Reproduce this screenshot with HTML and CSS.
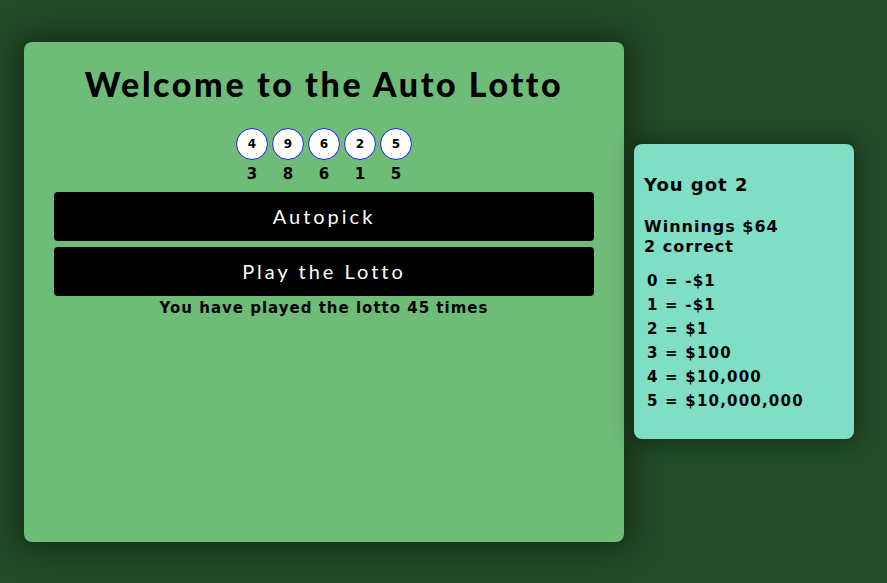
FILE: index.html
```html
<!DOCTYPE html>
<html>
<head>
<meta charset="utf-8">
<link rel="stylesheet" href="styles.css">
</head>
<body>
<div class="page">
  <main class="card">
    <h1 class="title">Welcome to the Auto Lotto</h1>
    <div class="balls">
      <div class="col"><div class="ball">4</div><div class="pick">3</div></div>
      <div class="col"><div class="ball">9</div><div class="pick">8</div></div>
      <div class="col"><div class="ball">6</div><div class="pick">6</div></div>
      <div class="col"><div class="ball">2</div><div class="pick">1</div></div>
      <div class="col"><div class="ball">5</div><div class="pick">5</div></div>
    </div>
    <button class="btn">Autopick</button>
    <button class="btn">Play the Lotto</button>
    <p class="played">You have played the lotto 45 times</p>
  </main>
  <aside class="side">
    <h2 class="got">You got 2</h2>
    <p class="win">Winnings $64<br>2 correct</p>
    <ul class="prizes">
      <li>0 = -$1</li>
      <li>1 = -$1</li>
      <li>2 = $1</li>
      <li>3 = $100</li>
      <li>4 = $10,000</li>
      <li>5 = $10,000,000</li>
    </ul>
  </aside>
</div>
</body>
</html>
```
FILE: styles.css
```css
html, body {
  margin: 0;
  height: 100%;
  background: #214a26;
  font-family: "DejaVu Sans", sans-serif;
  color: #000;
}
.page {
  height: 100%;
  display: flex;
  align-items: center;
  padding-left: 24px;
  gap: 10px;
  box-sizing: border-box;
}
.card {
  width: 600px;
  height: 500px;
  box-sizing: border-box;
  background: #6ebc78;
  border-radius: 8px;
  box-shadow: 0 0 30px 8px rgba(0,0,0,0.35);
  display: flex;
  flex-direction: column;
  align-items: center;
  padding: 20px 30px;
}
.title {
  margin: 0;
  font-family: "Lato", sans-serif;
  font-size: 34px;
  font-weight: 900;
  letter-spacing: 2.6px;
  line-height: 44px;
}
.balls {
  display: flex;
  gap: 4px;
  margin-top: 22px;
}
.col {
  display: flex;
  flex-direction: column;
  align-items: center;
}
.ball {
  width: 30px;
  height: 30px;
  border: 1px solid #1a1aff;
  border-radius: 50%;
  background: #fff;
  display: flex;
  align-items: center;
  justify-content: center;
  font-size: 12px;
  font-weight: bold;
}
.pick {
  font-size: 15px;
  font-weight: bold;
  line-height: 20px;
  margin-top: 4px;
}
.btn {
  width: 540px;
  height: 49px;
  border: none;
  border-radius: 4px;
  background: #000;
  color: #fff;
  font-family: "Lato", sans-serif;
  font-size: 20px;
  letter-spacing: 3px;
  margin-top: 8px;
}
.btn + .btn {
  margin-top: 6px;
}
.played {
  margin: 2px 0 0;
  font-size: 15px;
  font-weight: bold;
  letter-spacing: 1px;
  line-height: 20px;
}
.side {
  width: 220px;
  height: 295px;
  box-sizing: border-box;
  background: #80dec4;
  border-radius: 8px;
  box-shadow: 0 0 20px 4px rgba(0,0,0,0.3);
  padding: 28px 10px;
}
.got {
  margin: 0;
  font-size: 18px;
  font-weight: bold;
  letter-spacing: 1px;
  line-height: 26px;
}
.win {
  margin: 19px 0 0;
  font-size: 16px;
  font-weight: bold;
  letter-spacing: 1px;
  line-height: 20px;
}
.prizes {
  list-style: none;
  margin: 12px 0 0;
  padding: 0 0 0 3px;
  font-size: 15px;
  font-weight: bold;
  letter-spacing: 1.2px;
  line-height: 24px;
}
```
